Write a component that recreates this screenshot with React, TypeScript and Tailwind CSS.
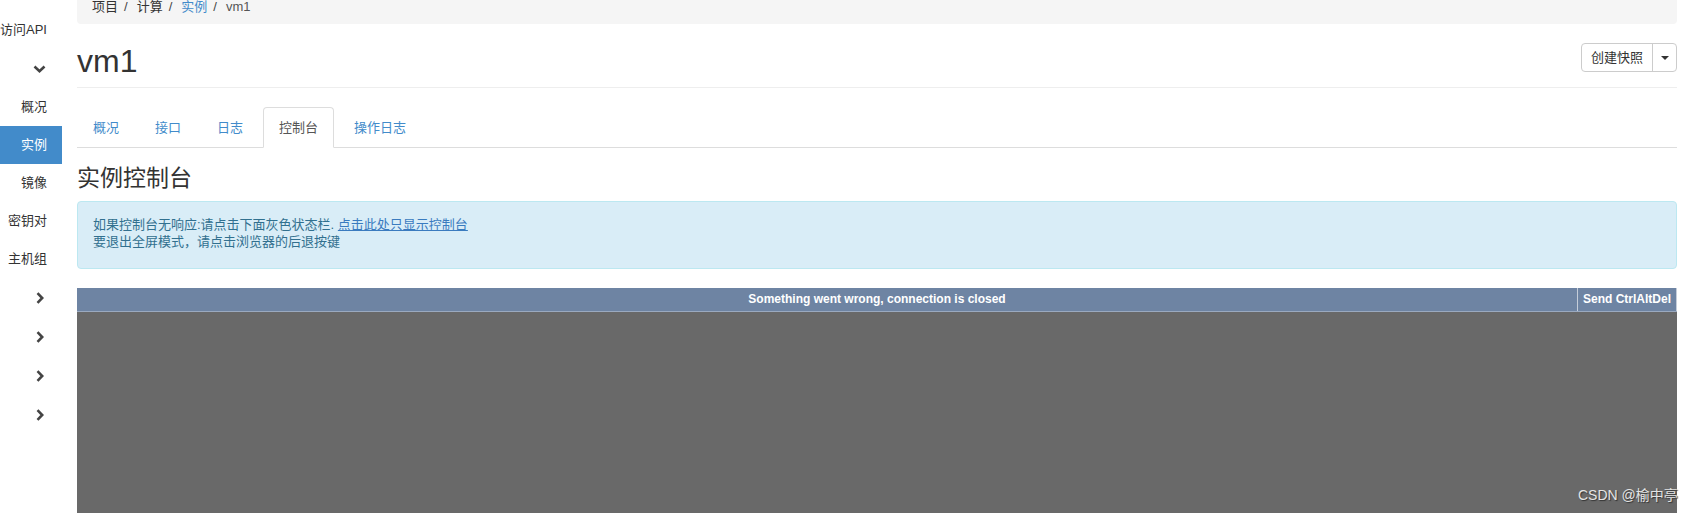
import React from "react";

const tabs = ["概况", "接口", "日志", "控制台", "操作日志"];

function ChevronDown() {
  return (
    <svg width="13" height="8" viewBox="0 0 13 8" fill="none">
      <polyline points="1.5,1.5 6.5,6.2 11.5,1.5" stroke="#444" strokeWidth="2.6" />
    </svg>
  );
}

function ChevronRight() {
  return (
    <svg width="8" height="12" viewBox="0 0 8 12" fill="none">
      <polyline points="1.5,1.2 6.2,6 1.5,10.8" stroke="#444" strokeWidth="2.6" />
    </svg>
  );
}

export default function App() {
  return (
    <div className="relative flex w-[1695px] h-[513px] overflow-hidden bg-white text-[#333] font-['Liberation_Sans','Noto_Sans_CJK_SC',sans-serif]">
      {/* Sidebar */}
      <div className="w-[62px] shrink-0 overflow-hidden pt-[11px] text-[13px] text-[#333]">
        <div className="h-[38px] flex items-center justify-end pr-[15px] whitespace-nowrap">访问API</div>
        <div className="h-[39px] flex items-center justify-end pr-[16px]"><ChevronDown /></div>
        <div className="h-[38px] flex items-center justify-end pr-[15px]">概况</div>
        <div className="h-[38px] flex items-center justify-end pr-[15px] bg-[#428bca] text-white">实例</div>
        <div className="h-[38px] flex items-center justify-end pr-[15px]">镜像</div>
        <div className="h-[38px] flex items-center justify-end pr-[15px]">密钥对</div>
        <div className="h-[38px] flex items-center justify-end pr-[15px]">主机组</div>
        <div className="h-[39px] flex items-center justify-end pr-[18px]"><ChevronRight /></div>
        <div className="h-[39px] flex items-center justify-end pr-[18px]"><ChevronRight /></div>
        <div className="h-[39px] flex items-center justify-end pr-[18px]"><ChevronRight /></div>
        <div className="h-[39px] flex items-center justify-end pr-[18px]"><ChevronRight /></div>
      </div>

      {/* Main */}
      <div className="flex-1 ml-[15px] mr-[18px] flex flex-col min-w-0">
        {/* Breadcrumb */}
        <div className="-mt-[11px] h-[35px] shrink-0 bg-[#f5f5f5] rounded-[4px] px-[15px] flex items-center text-[13px]">
          <span className="text-[#333]">项目</span>
          <span className="ml-[6px] mr-[9px] text-[#444]">/</span>
          <span className="text-[#333]">计算</span>
          <span className="ml-[6px] mr-[9px] text-[#444]">/</span>
          <span className="text-[#428bca]">实例</span>
          <span className="ml-[6px] mr-[9px] text-[#444]">/</span>
          <span className="text-[#555]">vm1</span>
        </div>

        {/* Header */}
        <div className="h-[64px] shrink-0 border-b border-[#eee] flex items-start justify-between">
          <h1 className="mt-[20px] text-[32px] leading-[35px] text-[#333]">vm1</h1>
          <div className="mt-[19px] flex h-[29px] border border-[#ccc] rounded-[4px] text-[13px] text-[#333]">
            <div className="px-[9px] flex items-center border-r border-[#ccc]">创建快照</div>
            <div className="w-[23px] flex items-center justify-center">
              <span className="w-0 h-0 border-x-[4px] border-x-transparent border-t-[4px] border-t-[#333]" />
            </div>
          </div>
        </div>

        {/* Tabs */}
        <div className="pt-[19px] shrink-0 border-b border-[#ddd] flex text-[13px]">
          {tabs.map((t) => (
            <div
              key={t}
              className={
                t === "控制台"
                  ? "h-[41px] -mb-px mr-[4px] px-[15px] flex items-center border border-[#ddd] border-b-white rounded-t-[4px] bg-white text-[#555]"
                  : "h-[41px] -mb-px mr-[4px] px-[15px] flex items-center border border-transparent text-[#428bca]"
              }
            >
              {t}
            </div>
          ))}
        </div>

        <h3 className="mt-[18px] text-[23px] leading-[25px] text-[#333] shrink-0">实例控制台</h3>

        {/* Alert */}
        <div className="mt-[10px] shrink-0 bg-[#d9edf7] border border-[#bce8f1] rounded-[4px] pl-[15px] pt-[14px] pb-[18px] text-[13px] leading-[17px] text-[#31708f]">
          <div>
            如果控制台无响应:请点击下面灰色状态栏.{" "}
            <span className="underline text-[#3a7bbf]">点击此处只显示控制台</span>
          </div>
          <div>要退出全屏模式，请点击浏览器的后退按键</div>
        </div>

        {/* Console */}
        <div className="mt-[19px] flex-1 flex flex-col">
          <div className="relative h-[24px] shrink-0 bg-[#6e84a3] border-b border-[#9aa9bf] text-center text-white font-bold text-[12px] leading-[23px]">
            Something went wrong, connection is closed
            <div className="absolute right-0 top-0 h-[23px] px-[5px] border-x border-[#c5cdd9] leading-[23px]">
              Send CtrlAltDel
            </div>
          </div>
          <div className="flex-1 bg-[#696969]" />
        </div>
      </div>

      <div className="absolute left-[1578px] top-[485px] text-[14px] text-[#e4e4e4] [text-shadow:1px_1px_1px_#333] whitespace-nowrap">
        CSDN @榆中亭
      </div>
    </div>
  );
}
